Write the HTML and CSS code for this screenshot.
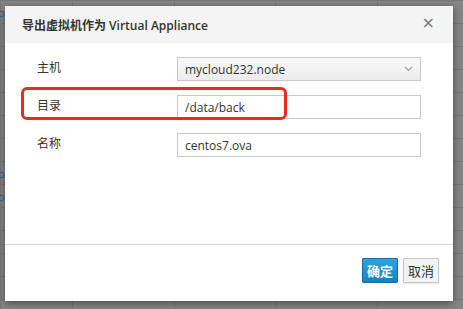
FILE: index.html
```html
<!DOCTYPE html>
<html lang="zh-CN">
<head>
    <meta charset="UTF-8">
    <meta name="viewport" content="width=device-width, initial-scale=1.0">
    <title>导出虚拟机</title>
    <link rel="stylesheet" href="styles.css">
</head>
<body>
    <table class="grid">
        <tr><td class="c1">o</td><td></td><td></td><td></td><td></td></tr>
        <tr><td class="c1"></td><td></td><td></td><td></td><td></td></tr>
        <tr><td class="c1"></td><td></td><td></td><td></td><td></td></tr>
        <tr><td class="c1"></td><td></td><td></td><td></td><td></td></tr>
        <tr><td class="c1"></td><td></td><td></td><td></td><td></td></tr>
        <tr><td class="c1"></td><td></td><td></td><td></td><td></td></tr>
        <tr><td class="c1"></td><td></td><td></td><td></td><td></td></tr>
        <tr><td class="c1">o</td><td></td><td></td><td></td><td></td></tr>
        <tr><td class="c1">o</td><td></td><td></td><td></td><td></td></tr>
        <tr><td class="c1"></td><td></td><td></td><td></td><td></td></tr>
        <tr><td class="c1"></td><td></td><td></td><td></td><td></td></tr>
        <tr><td class="c1"></td><td></td><td></td><td></td><td></td></tr>
        <tr><td class="c1"></td><td></td><td></td><td></td><td></td></tr>
        <tr><td class="c1"></td><td></td><td></td><td></td><td></td></tr>
    </table>

    <div class="modal">
        <div class="modal-header">
            <h4>导出虚拟机作为 Virtual Appliance</h4>
            <span class="close">&times;</span>
        </div>
        <div class="modal-body">
            <div class="form-row">
                <label>主机</label>
                <div class="select">
                    <span>mycloud232.node</span>
                    <svg width="9" height="6" viewBox="0 0 9 6"><path d="M1 1 L4.5 4.5 L8 1" fill="none" stroke="#999" stroke-width="1.1"/></svg>
                </div>
            </div>
            <div class="form-row">
                <label>目录</label>
                <input type="text" value="/data/back">
            </div>
            <div class="form-row">
                <label>名称</label>
                <input type="text" value="centos7.ova">
            </div>
            <div class="mark"></div>
        </div>
        <div class="modal-footer">
            <button class="btn btn-primary">确定</button>
            <button class="btn btn-default">取消</button>
        </div>
    </div>
</body>
</html>
```

FILE: styles.css
```css
body {
    margin: 0;
    background-color: #858585;
    font-family: "Open Sans", "Noto Sans CJK SC", sans-serif;
    overflow: hidden;
}

.grid {
    border-collapse: collapse;
    width: 480px;
}

.grid td {
    height: 22px;
    border: 1px solid #777;
    padding: 0;
    width: 107px;
}

.grid td.c1 {
    width: 75px;
    color: #2f5f86;
    font-size: 11px;
    text-indent: -3px;
    vertical-align: middle;
}

.modal {
    position: absolute;
    left: 5px;
    top: 6px;
    width: 448px;
    height: 295px;
    background-color: white;
    box-shadow: 0 2px 8px rgba(0,0,0,0.45);
    display: flex;
    flex-direction: column;
}

.modal-header {
    background-color: #f4f4f4;
    height: 37px;
    display: flex;
    align-items: center;
    justify-content: space-between;
    padding: 0 16px 0 17px;
}

.modal-header h4 {
    margin: 0;
    font-size: 12px;
    font-weight: 600;
    color: #333;
    padding-top: 1px;
}

.close {
    font-family: "DejaVu Sans", sans-serif;
    font-size: 16px;
    color: #777;
    margin-top: -5px;
    margin-right: 2px;
}

.modal-body {
    position: relative;
    flex: 1;
    padding: 14px 0 0 32px;
    border-bottom: 1px solid #d4d4d4;
}

.form-row {
    display: flex;
    align-items: center;
    height: 24px;
    margin-bottom: 14px;
}

.form-row label {
    width: 140px;
    font-size: 12px;
    color: #333;
    margin-top: -4px;
}

.form-row input,
.select {
    box-sizing: border-box;
    width: 244px;
    height: 24px;
    border: 1px solid #c8c8c8;
    padding: 0 7px;
    font-family: inherit;
    font-size: 12px;
    color: #333;
    margin: 0;
    outline: none;
}

.select {
    display: flex;
    align-items: center;
    justify-content: space-between;
    background: linear-gradient(#f8f8f8, #ececec);
    padding-right: 7px;
}

.mark {
    position: absolute;
    left: 16px;
    top: 44px;
    width: 260px;
    height: 27px;
    border: 3px solid #ea2b22;
    border-radius: 6px;
}

.modal-footer {
    height: 56px;
    display: flex;
    justify-content: flex-end;
    align-items: flex-start;
    gap: 5px;
    padding: 13px 14px 0 0;
    box-sizing: border-box;
}

.btn {
    height: 25px;
    padding: 0 4px;
    font-family: "Noto Sans CJK SC", sans-serif;
    font-size: 13px;
    border-radius: 1px;
    cursor: pointer;
}

.btn-primary {
    background: linear-gradient(#2ea3dd, #1781c3);
    border: 1px solid #1a6ca8;
    color: white;
    font-weight: bold;
}

.btn-default {
    background-color: #f3f3f3;
    border: 1px solid #c6c6c6;
    color: #333;
    box-shadow: 0 1px 2px rgba(0,0,0,0.1);
}
```
